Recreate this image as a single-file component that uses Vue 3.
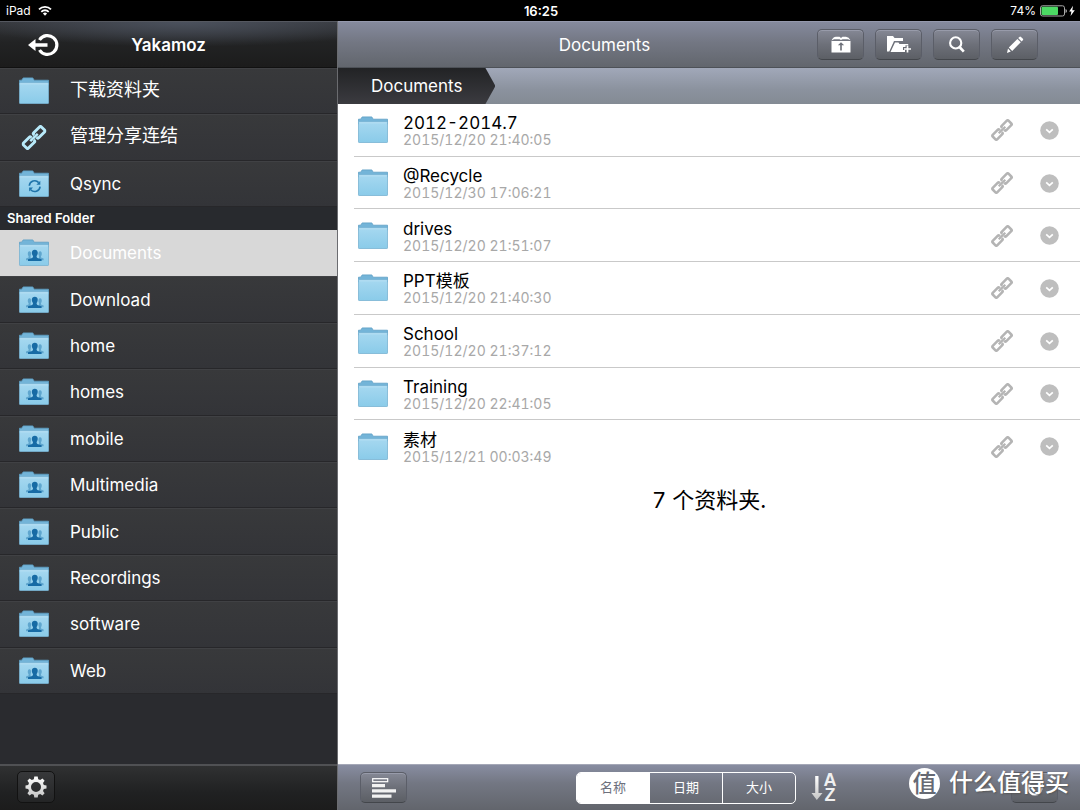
<script setup>
import { ref } from 'vue'

const shortcuts = [
  { label: '下载资料夹', icon: 'folder' },
  { label: '管理分享连结', icon: 'link' },
  { label: 'Qsync', icon: 'sync' }
]
const sharedFolders = [
  'Documents', 'Download', 'home', 'homes', 'mobile',
  'Multimedia', 'Public', 'Recordings', 'software', 'Web'
]
const selected = ref('Documents')

const files = [
  { name: '2012-2014.7', date: '2015/12/20 21:40:05' },
  { name: '@Recycle', date: '2015/12/30 17:06:21' },
  { name: 'drives', date: '2015/12/20 21:51:07' },
  { name: 'PPT模板', date: '2015/12/20 21:40:30' },
  { name: 'School', date: '2015/12/20 21:37:12' },
  { name: 'Training', date: '2015/12/20 22:41:05' },
  { name: '素材', date: '2015/12/21 00:03:49' }
]
const sortKeys = ['名称', '日期', '大小']
const sortKey = ref('名称')
</script>

<template>
  <div class="app">
    <svg class="defs" width="0" height="0" aria-hidden="true">
      <defs>
        <linearGradient id="folderFill" x1="0" y1="0" x2="0" y2="1">
          <stop offset="0" stop-color="#a6d8f0" />
          <stop offset="1" stop-color="#8acbe9" />
        </linearGradient>
        <linearGradient id="metal" x1="0" y1="0" x2="0" y2="1">
          <stop offset="0" stop-color="#ffffff" />
          <stop offset="1" stop-color="#c4c4c4" />
        </linearGradient>
        <symbol id="folder" viewBox="0 0 32 28">
          <path d="M1.500 5.500V3.200H3.600L5.200 .9H14.800L16.200 3.200H30.500V8H1.500Z" fill="#73b4d8" stroke="#5e9fc5" stroke-width="0.800" />
          <rect x="1.500" y="5.800" width="29" height="20.700" rx="0.600" fill="url(#folderFill)" stroke="#79b3d2" stroke-width="0.800" />
          <path d="M2.200 6.800H29.800" stroke="#c0e6f7" stroke-width="0.800" />
        </symbol>
        <symbol id="people" viewBox="0 0 32 28">
          <g fill="#5fa6ce">
            <path d="M8 21.200V19.600L10.600 18.400V17.200C9.300 15.500 9.600 12.200 11.400 12.200S13.600 15 12.600 17V21.200Z" />
            <path d="M25.600 21.200V19.600L23 18.400V17.200C24.300 15.500 24 12.200 22.200 12.200S20 15 21 17V21.200Z" />
          </g>
          <path d="M10 22V20.300L14.200 18.900Q15.300 18.300 15 17C13.400 15.400 13 10.800 16.800 10.800S20.200 15.400 18.600 17Q18.300 18.300 19.400 18.900L23.600 20.300V22Z" fill="#176ba5" />
        </symbol>
        <symbol id="sync" viewBox="0 0 32 28">
          <path d="M11.300 15.700A5.400 5.400 0 0 1 20.700 12.600M22.100 16.600A5.400 5.400 0 0 1 12.700 19.700" fill="none" stroke="#1f74aa" stroke-width="1.600" />
          <path d="M22.300 10.800V14.700H18.400ZM11.100 21.500V17.600H15Z" fill="#1f74aa" />
        </symbol>
        <symbol id="link" viewBox="0 0 26 26">
          <g transform="rotate(-45 13 13)" fill="none" stroke="currentColor">
            <path d="M11 11.500V10.500Q11 9.300 9.800 9.300H1.200Q-.2 9.300 -.2 10.700V15.300Q-.2 16.700 1.200 16.700H9.800Q11 16.700 11 15.500V14.500" stroke-width="3" />
            <path d="M15 11.500V10.500Q15 9.300 16.200 9.300H24.800Q26.200 9.300 26.200 10.700V15.300Q26.200 16.700 24.800 16.700H16.200Q15 16.700 15 15.500V14.500" stroke-width="3" />
            <path d="M7.500 13H18.500" stroke-width="2.600" />
          </g>
        </symbol>
      </defs>
    </svg>

    <div class="status">
      <div class="status-left">
        <span>iPad</span>
        <svg width="14" height="11" viewBox="0 0 14 11" fill="none" stroke="#fff" stroke-width="1.800" aria-label="Wi-Fi">
          <path d="M1 4.300A8.500 8.500 0 0 1 13 4.300M3.300 6.800A5.200 5.200 0 0 1 10.700 6.800" />
          <path d="M7 10.800L4.900 8.600A3 3 0 0 1 9.100 8.600Z" fill="#fff" stroke="none" />
        </svg>
      </div>
      <time class="clock">16:25</time>
      <div class="status-right">
        <span>74%</span>
        <svg width="36" height="12" viewBox="0 0 36 12" aria-label="Battery charging">
          <rect x=".5" y=".8" width="24" height="10.200" rx="2" fill="none" stroke="#aaa" />
          <rect x="1.500" y="1.800" width="16.500" height="8.200" rx="1" fill="#4cd964" />
          <path d="M25.500 4v4q1.500-.3 1.500-2t-1.500-2Z" fill="#aaa" />
          <path d="M33 .8L29.200 6.500H31.400L30.600 11L34.800 5.200H32.300Z" fill="#fff" />
        </svg>
      </div>
    </div>

    <div class="columns">
      <aside class="sidebar">
        <header class="side-head">
          <button class="logout" type="button" aria-label="Log out">
            <svg width="32" height="24" viewBox="0 0 32 24">
              <path d="M11.500 7A9.400 9.400 0 1 1 11.500 17" fill="none" stroke="#fff" stroke-width="3.200" />
              <path d="M0 12L7.500 6V10.300H19.500V13.700H7.500V18Z" fill="#fff" />
            </svg>
          </button>
          <h1>Yakamoz</h1>
        </header>

        <nav class="nav">
          <ul class="rows rows-short">
            <li v-for="s in shortcuts" :key="s.label">
              <a href="#" class="nav-row" @click.prevent>
                <svg v-if="s.icon === 'link'" class="row-icon chain" viewBox="0 0 26 26"><use href="#link" /></svg>
                <svg v-else class="row-icon" viewBox="0 0 32 28">
                  <use href="#folder" />
                  <use v-if="s.icon === 'sync'" href="#sync" />
                </svg>
                <span :class="{ han: s.icon !== 'sync' }">{{ s.label }}</span>
              </a>
            </li>
          </ul>
          <h2>Shared Folder</h2>
          <ul class="rows rows-shared">
            <li v-for="f in sharedFolders" :key="f">
              <a href="#" class="nav-row" :class="{ active: f === selected }" @click.prevent="selected = f">
                <svg class="row-icon" viewBox="0 0 32 28"><use href="#folder" /><use href="#people" /></svg>
                <span>{{ f }}</span>
              </a>
            </li>
          </ul>
        </nav>

        <footer class="side-foot">
          <button class="gear" type="button" aria-label="Settings">
            <svg width="22" height="22" viewBox="0 0 22 22">
              <path fill="url(#metal)" fill-rule="evenodd" d="M9.300 .5H12.700L13.200 3.300L15.200 4.100L17.500 2.500L19.600 4.700L18 7L18.800 8.900L21.500 9.400V12.600L18.800 13.100L18 15L19.600 17.300L17.500 19.500L15.200 17.900L13.200 18.700L12.700 21.500H9.300L8.800 18.700L6.800 17.900L4.500 19.500L2.400 17.300L4 15L3.200 13.100L.5 12.600V9.400L3.200 8.900L4 7L2.400 4.700L4.500 2.500L6.800 4.100L8.800 3.300ZM11 6A5 5 0 1 0 11 16A5 5 0 1 0 11 6Z" />
            </svg>
          </button>
        </footer>
      </aside>

      <main class="main">
        <header class="main-head">
          <h2>Documents</h2>
          <div class="tools">
            <button class="tool" type="button" aria-label="Upload">
              <svg width="20" height="17" viewBox="0 0 20 17">
                <path d="M.5 4.500Q2 1 5 .7H8.500L10 2L11.500 .7H15Q18 1 19.500 4.200L17 3.200H11.500L10 4L8.500 3.200H3Z" fill="#fff" />
                <path fill-rule="evenodd" d="M.5 5H19.500V16.500H.5ZM10 6.200L6.800 9.200H9.200V14.500H10.800V9.200H13.200Z" fill="#fff" />
              </svg>
            </button>
            <button class="tool" type="button" aria-label="New folder">
              <svg width="26" height="19" viewBox="0 0 26 19">
                <path d="M1 16.500V1H7L8.500 3H17V6H8L3.300 16.500Z" fill="#fff" />
                <path d="M9 7.500H12.500L13.500 9H22.500L21.800 10.200H19.500V12H17V15H19V17H4.500Z" fill="#fff" />
                <path d="M21.500 10.500V17.500M18 14H25" stroke="#fff" stroke-width="1.700" />
              </svg>
            </button>
            <button class="tool" type="button" aria-label="Search">
              <svg width="16" height="17" viewBox="0 0 16 17" fill="none" stroke="#fff">
                <circle cx="6.700" cy="6.900" r="5.600" stroke-width="2.100" />
                <path d="M10.500 11L14.800 15.600" stroke-width="2.600" />
              </svg>
            </button>
            <button class="tool" type="button" aria-label="Edit">
              <svg width="18" height="18" viewBox="0 0 18 18" fill="#fff">
                <path d="M1 17L2 12.500L4.800 15.500ZM2.800 11.500L11.400 2.900L14.800 6.300L6.200 14.900ZM12.200 2.100L13.400 .9Q14.200 .2 15 .9L16.900 2.800Q17.500 3.500 16.800 4.300L15.600 5.500Z" />
              </svg>
            </button>
          </div>
        </header>

        <nav class="crumbs" aria-label="Path">
          <a href="#" class="crumb" @click.prevent>Documents</a>
        </nav>

        <section class="content">
          <ul class="files">
            <li v-for="f in files" :key="f.name" class="file">
              <svg class="file-icon" viewBox="0 0 32 28"><use href="#folder" /></svg>
              <div class="file-body">
                <div class="file-text">
                  <a href="#" @click.prevent>{{ f.name }}</a>
                  <time>{{ f.date }}</time>
                </div>
                <button class="plain" type="button" aria-label="Share link">
                  <svg width="22" height="22" viewBox="0 0 26 26"><use href="#link" /></svg>
                </button>
                <button class="plain" type="button" aria-label="More">
                  <svg width="19" height="19" viewBox="0 0 19 19">
                    <circle cx="9.500" cy="9.500" r="9.300" fill="#bebebe" />
                    <path d="M6.200 8.300L9.500 11.300L12.800 8.300" fill="none" stroke="#fff" stroke-width="1.700" />
                  </svg>
                </button>
              </div>
            </li>
          </ul>
          <p class="total">7 个资料夹.</p>
        </section>

        <footer class="main-foot">
          <button class="tool" type="button" aria-label="View mode">
            <svg width="26" height="22" viewBox="0 0 26 22">
              <rect x="1.700" y="1.700" width="15" height="3" fill="none" stroke="#fff" stroke-width="1.200" />
              <path d="M1 7H14V10.200H1ZM1 12.200H25V15.400H1ZM1 17.600H20.500V20.800H1Z" fill="#f2f2f2" />
            </svg>
          </button>
          <div class="sorting">
            <div class="segments" role="group" aria-label="Sort by">
              <button
                v-for="k in sortKeys"
                :key="k"
                type="button"
                :aria-pressed="k === sortKey"
                :class="{ on: k === sortKey }"
                @click="sortKey = k"
              >{{ k }}</button>
            </div>
            <button class="az" type="button" aria-label="Sort order">
              <svg width="12" height="27" viewBox="0 0 12 27" fill="url(#metal)">
                <path d="M4.200 2H7.500V19H11.500L5.800 26L.5 19H4.200Z" />
              </svg>
              <span class="letters"><span>A</span><span>Z</span></span>
            </button>
          </div>
          <button class="tool" type="button" aria-label="Refresh">
            <svg width="18" height="18" viewBox="0 0 18 18">
              <path d="M3.500 5.500A6.500 6.500 0 1 0 14.500 5.500" fill="none" stroke="#fff" stroke-width="2.200" />
              <path d="M11.500 2.500H17V8Z" fill="#fff" />
            </svg>
          </button>
        </footer>
      </main>
    </div>

    <div class="watermark"><span class="seal">值</span><span>什么值得买</span></div>
  </div>
</template>

<style>
body {
  margin: 0;
}
</style>

<style scoped>
.app {
  position: relative;
  display: flex;
  flex-direction: column;
  min-height: 100vh;
  font-family: Inter, "Noto Sans CJK SC", sans-serif;
  font-size: 17px;
  font-variant-numeric: tabular-nums;
  color: #fff;
  background: #000;
}
.defs { position: absolute; }
h1, h2, p, ul { margin: 0; padding: 0; font-weight: 400; }
ul { list-style: none; }
a { color: inherit; text-decoration: none; }
button { font: inherit; color: inherit; padding: 0; border: 0; background: none; cursor: pointer; }
svg { display: block; flex: none; }

.status {
  display: grid;
  grid-template-columns: 1fr auto 1fr;
  align-items: center;
  height: 21px;
  padding: 0 4px 0 6px;
  font-size: 12px;
  font-variant-numeric: normal;
}
.status-left, .status-right { display: flex; align-items: center; gap: 7px; }
.status-right { justify-content: flex-end; gap: 4px; }
.clock { font-weight: 600; font-size: 13px; }

.columns { flex: 1; display: flex; }
.sidebar {
  display: flex;
  flex-direction: column;
  box-sizing: border-box;
  width: 338px;
  flex: none;
  border-right: 1px solid #6b6c70;
  background: #2a2b2f;
}
.side-head {
  display: grid;
  grid-template-columns: 60px 1fr 60px;
  align-items: center;
  box-sizing: border-box;
  height: 47px;
  border-top: 1px solid #555860;
  border-bottom: 1px solid #111;
  background: radial-gradient(ellipse 65% 55% at 55% 0, #4b515d, transparent), linear-gradient(#34363a, #222324 45%, #1c1c1c);
}
.side-head h1 { text-align: center; font-size: 17px; font-weight: 600; }
.logout { justify-self: end; }

.nav { flex: 1; }
.rows { display: grid; grid-auto-rows: 1fr; }
.rows-short { min-height: 139px; }
.rows-shared { min-height: 464px; }
.nav-row {
  display: flex;
  align-items: center;
  gap: 20px;
  height: 100%;
  box-sizing: border-box;
  padding-left: 18px;
  border-top: 1px solid #404144;
  border-bottom: 1px solid #27272a;
  background: linear-gradient(#38393b, #333438);
}
.nav-row.active { background: #d8d8d8; border-color: #d8d8d8; }
.nav-row .han { font-size: 18px; line-height: 24px; padding-bottom: 2px; }
.row-icon { width: 32px; height: 28px; }
.row-icon.chain { height: 25px; color: #b8eafa; }
.nav h2 { padding-left: 7px; font-size: 13px; line-height: 23px; font-weight: 600; background: #282a2e; }
.side-foot {
  box-sizing: border-box;
  height: 46px;
  padding: 5px 17px;
  border-top: 2px solid #505154;
  background: linear-gradient(#303132, #202122 60%, #1c1c1c);
}
.gear {
  display: grid;
  place-items: center;
  box-sizing: border-box;
  width: 38px;
  height: 32px;
  border: 1px solid #121212;
  border-radius: 5px;
  background: linear-gradient(#37383a, #242526);
}

.main { flex: 1; min-width: 0; display: flex; flex-direction: column; background: #fff; }
.main-head {
  display: flex;
  align-items: center;
  box-sizing: border-box;
  height: 47px;
  padding-right: 42px;
  border-top: 1px solid #9599ad;
  border-bottom: 1px solid #4d5157;
  background: linear-gradient(#858a9d, #737783 45%, #62666d);
}
.main-head h2 { flex: 1; padding-left: 54px; text-align: center; font-size: 17px; }
.tools { display: flex; gap: 11px; }
.tool {
  display: grid;
  place-items: center;
  box-sizing: border-box;
  width: 47px;
  height: 31px;
  border: 1px solid #5b5e68;
  border-bottom-color: #43464b;
  border-radius: 5px;
  background: linear-gradient(#858895, #6d7079 50%, #5c5f65);
  box-shadow: inset 0 1px #989baa;
}
.crumbs {
  display: flex;
  height: 36px;
  background: linear-gradient(#a1a8b9, #8b929e 60%, #848b94);
}
.crumb {
  padding: 0 33px;
  line-height: 37px;
  background: linear-gradient(#222325, #3b3b40);
  clip-path: polygon(0 0, calc(100% - 10px) 0, 100% 50%, calc(100% - 10px) 100%, 0 100%);
}

.content { flex: 1; color: #000; }
.files { display: grid; grid-auto-rows: 1fr; min-height: 369px; }
.file {
  display: flex;
  align-items: center;
  gap: 14px;
  padding: 0 21px 0 19px;
  background: linear-gradient(#c9c9c9, #c9c9c9) 16px 100% / 100% 1px no-repeat;
}
.file:last-child { background: none; }
.file-icon { width: 32px; height: 28px; }
.file-body { flex: 1; display: flex; align-items: center; gap: 27px; }
.file-text { flex: 1; display: flex; flex-direction: column; padding-top: 2px; }
.file-text a { line-height: 18px; }
.file-text time { font-size: 14px; line-height: 16px; color: #a8a8a8; }
.plain { color: #b4b4b4; }
.total { text-align: center; font-size: 22px; line-height: 54px; }

.main-foot {
  display: flex;
  align-items: center;
  justify-content: space-between;
  box-sizing: border-box;
  height: 46px;
  padding: 0 22px;
  border-top: 1px solid #a5a8b7;
  background: linear-gradient(#888da1, #737783 40%, #62656c);
}
.sorting { display: flex; align-items: center; gap: 15px; padding-right: 5px; }
.segments {
  display: flex;
  box-sizing: border-box;
  height: 32px;
  border: 1px solid #fff;
  border-radius: 5px;
  overflow: hidden;
}
.segments button { width: 72px; font-size: 13px; line-height: 28px; padding-bottom: 2px; }
.segments button + button { width: 73px; border-left: 1px solid #fff; }
.segments .on { background: #fff; color: #6d707d; }
.az { display: flex; align-items: center; }
.letters { display: flex; flex-direction: column; width: 14px; font-family: "Liberation Sans", sans-serif; font-size: 18px; line-height: 15px; font-weight: 700; color: #f0f0f0; }

.watermark {
  position: absolute;
  right: 11px;
  bottom: 11px;
  display: flex;
  align-items: center;
  gap: 9px;
  font-size: 24px;
  line-height: 32px;
  font-weight: 500;
  text-shadow: 1px 1px 2px #555;
  pointer-events: none;
}
.seal {
  width: 31px;
  line-height: 31px;
  border-radius: 50%;
  text-align: center;
  color: #666a74;
  background: #fff;
  text-shadow: none;
}
</style>
